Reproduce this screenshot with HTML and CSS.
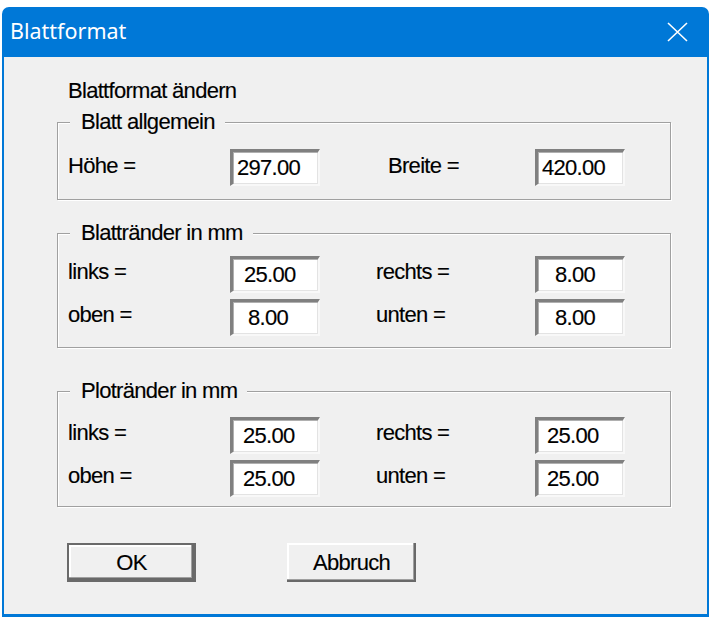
FILE: index.html
```html
<!DOCTYPE html>
<html lang="de">
<head>
<meta charset="utf-8">
<title>Blattformat</title>
<link rel="stylesheet" href="styles.css">
</head>
<body>
<div class="window">
  <div class="titlebar">
    <span class="title">Blattformat</span>
    <svg class="close" width="21" height="20" viewBox="0 0 21 20" aria-hidden="true">
      <path d="M1 1 L20 19 M20 1 L1 19" stroke="#fff" stroke-width="1.6" fill="none"/>
    </svg>
  </div>
  <div class="client">
    <div class="heading">Blattformat ändern</div>

    <fieldset class="group g1">
      <legend>Blatt allgemein</legend>
      <div class="grid">
        <span class="label">Höhe =</span>
        <div class="field p6">297.00</div>
        <span class="label wide">Breite =</span>
        <div class="field p6">420.00</div>
      </div>
    </fieldset>

    <fieldset class="group g2">
      <legend>Blattränder in mm</legend>
      <div class="grid">
        <span class="label">links =</span>
        <div class="field p13">25.00</div>
        <span class="label">rechts =</span>
        <div class="field p19">8.00</div>
        <span class="label">oben =</span>
        <div class="field p17">8.00</div>
        <span class="label">unten =</span>
        <div class="field p19">8.00</div>
      </div>
    </fieldset>

    <fieldset class="group g3">
      <legend>Plotränder in mm</legend>
      <div class="grid">
        <span class="label">links =</span>
        <div class="field p12">25.00</div>
        <span class="label">rechts =</span>
        <div class="field p11">25.00</div>
        <span class="label">oben =</span>
        <div class="field p12">25.00</div>
        <span class="label">unten =</span>
        <div class="field p11">25.00</div>
      </div>
    </fieldset>

    <div class="buttons">
      <button class="btn default">OK</button>
      <button class="btn">Abbruch</button>
    </div>
  </div>
</div>
</body>
</html>
```

FILE: styles.css
```css
* { box-sizing: border-box; }

html, body {
  margin: 0;
  padding: 0;
  background: #ffffff;
}

body {
  font-family: "Liberation Sans", Arial, sans-serif;
  font-size: 22px;
  letter-spacing: -0.7px;
  line-height: 24px;
  color: #000;
  -webkit-text-stroke: 0.15px #000;
}

.window {
  width: 707px;
  height: 610px;
  margin: 7px 0 0 2px;
  background: #0078d7;
  border-radius: 7px 7px 0 0;
  display: flex;
  flex-direction: column;
}

.titlebar {
  height: 50px;
  flex: none;
  display: flex;
  align-items: center;
  justify-content: space-between;
  padding: 0 21px 2px 8px;
}

.title {
  font-family: "Noto Sans", "Open Sans", sans-serif;
  font-size: 21.5px;
  letter-spacing: 0;
  line-height: 30px;
  color: #ffffff;
  -webkit-text-stroke: 0;
}

.close {
  display: block;
  margin-top: 1px;
}

.client {
  margin: 0 2px;
  height: 557px;
  background: #f0f0f0;
  padding: 22px 0 0 0;
}

.heading {
  padding-left: 64px;
}

.group {
  margin: 7px 0 0 53px;
  width: 614px;
  padding: 0;
  min-width: 0;
  border: 1px solid #a0a0a0;
  box-shadow: inset 1px 1px 0 #ffffff, 1px 1px 0 #ffffff;
}

.group legend {
  margin-left: 12px;
  padding: 0 10px 0 11px;
  line-height: 24px;
  background: #f0f0f0;
}

.grid {
  display: grid;
  grid-template-columns: 162px 90px 215px 90px;
  row-gap: 6px;
  padding-left: 10px;
}

.g1 .grid { padding-top: 15px; padding-bottom: 13px; }
.g1 .label { padding-top: 5px; }
.g2 { margin-top: 21px; }
.g2 .grid { padding-top: 11px; padding-bottom: 11px; }
.g3 { margin-top: 31px; }
.g3 .grid { padding-top: 14px; padding-bottom: 9px; }

.label {
  padding-top: 4px;
  white-space: nowrap;
}

.grid .label:nth-child(3),
.grid .label:nth-child(7) {
  padding-left: 56px;
}

.grid .label.wide {
  padding-left: 68px;
}

.field {
  height: 37px;
  background: #ffffff;
  border-style: solid;
  border-width: 3px 2px 2px 3px;
  border-color: #808080 #f8f8f8 #f8f8f8 #808080;
  box-shadow: inset 1px 1px 0 #b0b0b0, inset -1px -1px 0 #e3e3e3;
  padding-top: 4px;
  white-space: nowrap;
}

.p6 { padding-left: 4px; }
.p11 { padding-left: 9px; }
.p12 { padding-left: 10px; }
.p13 { padding-left: 11px; }
.p17 { padding-left: 15px; }
.p19 { padding-left: 17px; }

.buttons {
  display: flex;
  gap: 91px;
  margin: 36px 0 0 63px;
}

.btn {
  width: 129px;
  height: 39px;
  font: inherit;
  letter-spacing: inherit;
  color: #000;
  background: #f0f0f0;
  border: 0;
  padding: 1px 0 0 0;
  box-shadow: inset -2px -2px 0 #696969, inset -3px -3px 0 #a0a0a0, inset 2px 2px 0 #ffffff;
}

.btn.default {
  border: 2px solid #6a6a6a;
  box-shadow: inset -2px -2px 0 #696969, inset -3px -3px 0 #a0a0a0, inset 2px 2px 0 #ffffff;
}
```
